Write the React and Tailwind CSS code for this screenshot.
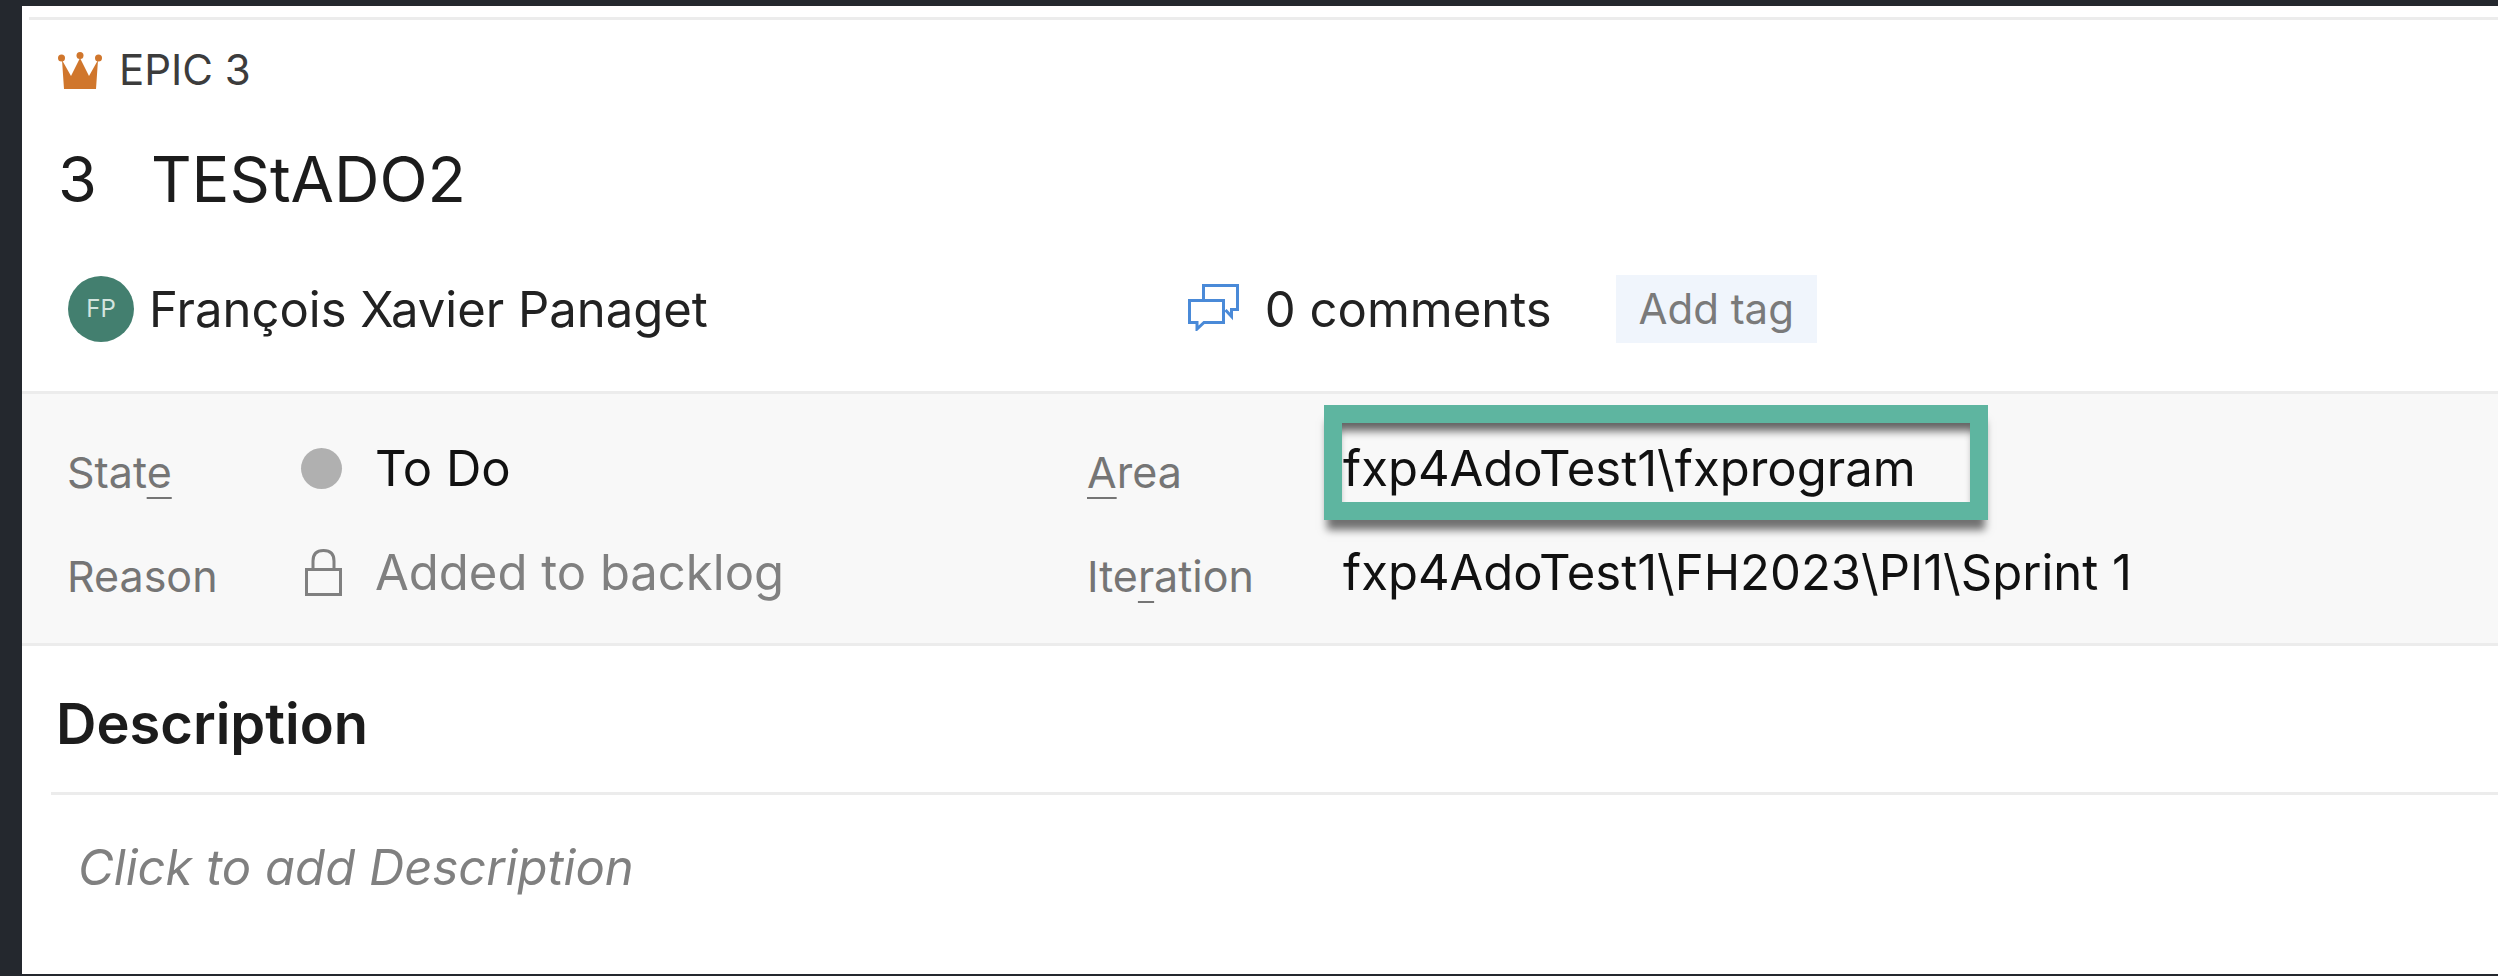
import React from 'react';

function Crown() {
  return (
    <svg width="44" height="37" viewBox="0 0 44 37" className="shrink-0">
      <path d="M4 8 L13 24 L22 6 L31 24 L40 8 L38 37 L6 37 Z" fill="#d0762c" />
      <circle cx="3.5" cy="6" r="3.5" fill="#d0762c" />
      <circle cx="22" cy="3.5" r="3.5" fill="#d0762c" />
      <circle cx="40.5" cy="6" r="3.5" fill="#d0762c" />
    </svg>
  );
}

function CommentsIcon() {
  return (
    <svg width="51" height="47" viewBox="0 0 51 47" fill="none" stroke="#4a8ad8" strokeWidth="3" className="mb-[3px] shrink-0">
      <path d="M15.5 15 V1.5 H49.5 V25.5 H43.5 V32.5 L37.5 26" />
      <path d="M1.5 16.5 H35.5 V38.5 H16 L9 45 V38.5 H1.5 Z" />
    </svg>
  );
}

function LockIcon() {
  return (
    <svg width="37" height="47" viewBox="0 0 37 47" fill="none" stroke="#808080" strokeWidth="3" className="shrink-0">
      <rect x="1.5" y="20.5" width="34" height="25" />
      <path d="M8 20 V12 C8 4.5 12.5 1.5 18.5 1.5 C24.5 1.5 29 4.5 29 12 V20" />
    </svg>
  );
}

function FieldLabel({ className, children }) {
  return <span className={`${className} shrink-0 pt-[9px] text-[43px] leading-none text-[#757575]`}>{children}</span>;
}

const keyUnderline = "underline decoration-[2px] underline-offset-[9px] [text-decoration-skip-ink:none]";

export default function App() {
  return (
    <div className="h-[976px] overflow-hidden border-l-[22px] border-t-[6px] border-b-[2px] border-[#24282e] bg-white [font-family:Inter,sans-serif]">
      <div className="ml-[7px] mt-[11px] h-[3px] bg-[#ececec]" />

      <div className="ml-[36px] mt-[29px] flex items-center gap-[17px]">
        <Crown />
        <span className="text-[42px] leading-none text-[#3c3c3c]">EPIC 3</span>
      </div>

      <h1 className="ml-[36px] mt-[57px] flex gap-[54px] text-[63px] font-normal leading-none text-[#1c1c1c]">
        <span>3</span>
        <span>TEStADO2</span>
      </h1>

      <div className="ml-[46px] mt-[64px] flex h-[68px] items-center">
        <div className="flex h-[66px] w-[66px] shrink-0 items-center justify-center rounded-full bg-[#437f6f] text-[24px] text-[#d4e4df]">FP</div>
        <span className="ml-[15px] text-[49px] leading-none text-[#222]">François Xavier Panaget</span>
        <div className="ml-[480px] flex items-center">
          <CommentsIcon />
          <span className="ml-[26px] text-[49px] leading-none text-[#222]">0 comments</span>
          <span className="ml-[64px] flex h-[68px] w-[201px] items-center justify-center bg-[#f0f5fc] text-[42px] leading-none text-[#7a7a7a]">Add tag</span>
        </div>
      </div>

      <div className="mt-[48px] h-[255px] border-y-[3px] border-[#ececec] bg-[#f8f8f8] pl-[45px]">
        <div className="mt-[52px] flex h-[44px] items-center">
          <FieldLabel className="w-[234px]">
            Stat<span className={keyUnderline}>e</span>
          </FieldLabel>
          <span className="h-[41px] w-[41px] shrink-0 rounded-full bg-[#b0b0b0]" />
          <span className="ml-[33px] w-[712px] text-[49px] leading-none text-[#111]">To Do</span>
          <FieldLabel className="w-[256px]">
            <span className={keyUnderline}>A</span>rea
          </FieldLabel>
          <span className="relative text-[49px] leading-none text-[#111]">
            fxp4AdoTest1\fxprogram
            <span className="absolute -left-[19px] -right-[72px] -top-[39px] -bottom-[27px] border-[18px] border-[#5eb5a0] shadow-[0_13px_8px_-3px_rgba(0,0,0,0.55),inset_0_12px_8px_-4px_rgba(0,0,0,0.6)]" />
          </span>
        </div>

        <div className="mt-[58px] flex h-[48px] items-center">
          <FieldLabel className="w-[234px]">Reason</FieldLabel>
          <span className="ml-[4px]"><LockIcon /></span>
          <span className="ml-[33px] w-[712px] text-[49px] leading-none text-[#808080]">Added to backlog</span>
          <FieldLabel className="w-[256px]">
            Ite<span className={keyUnderline}>r</span>ation
          </FieldLabel>
          <span className="text-[49px] leading-none text-[#111]">fxp4AdoTest1\FH2023\PI1\Sprint 1</span>
        </div>
      </div>

      <h2 className="ml-[34px] mt-[50px] text-[56px] font-semibold leading-none text-[#1c1c1c]">Description</h2>
      <div className="ml-[29px] mt-[40px] h-[3px] bg-[#ececec]" />
      <p className="ml-[56px] mt-[48px] text-[49px] italic leading-none text-[#808080]">Click to add Description</p>
    </div>
  );
}
